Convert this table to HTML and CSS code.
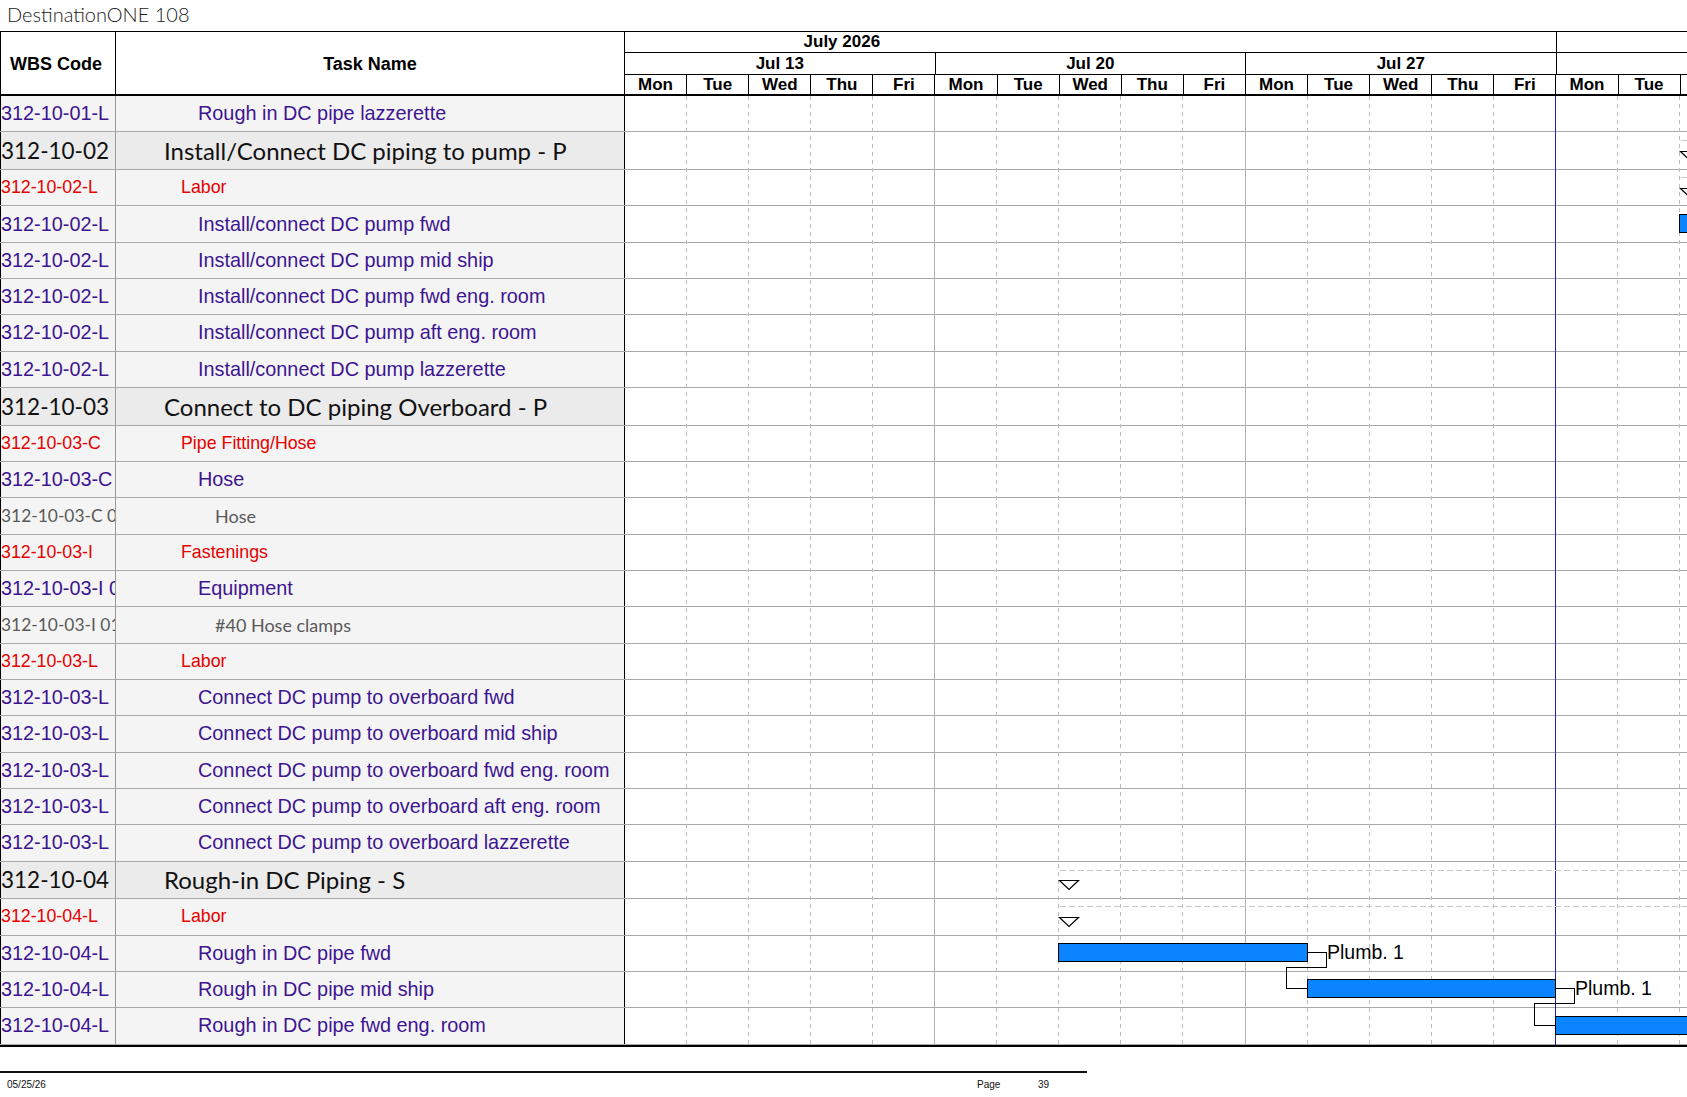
FILE: index.html
```html
<!DOCTYPE html>
<html lang="en">
<head>
<meta charset="utf-8">
<title>DestinationONE 108</title>
<link rel="stylesheet" href="styles.css">
</head>
<body>
<div class="title">DestinationONE 108</div>
<div class="sheet">
  <div class="head">
    <div class="hcell hwbs">WBS Code</div>
    <div class="hcell htask">Task Name</div>
    <div class="timescale">
      <div class="tier tier-month">
        <div class="tcell m-jul">July 2026</div>
        <div class="tcell m-aug"></div>
      </div>
      <div class="tier tier-week">
        <div class="tcell wk">Jul 13</div>
        <div class="tcell wk">Jul 20</div>
        <div class="tcell wk">Jul 27</div>
        <div class="tcell wk"></div>
      </div>
      <div class="tier tier-day">
        <div class="tcell dy">Mon</div><div class="tcell dy">Tue</div><div class="tcell dy">Wed</div><div class="tcell dy">Thu</div><div class="tcell dy">Fri</div>
        <div class="tcell dy">Mon</div><div class="tcell dy">Tue</div><div class="tcell dy">Wed</div><div class="tcell dy">Thu</div><div class="tcell dy">Fri</div>
        <div class="tcell dy">Mon</div><div class="tcell dy">Tue</div><div class="tcell dy">Wed</div><div class="tcell dy">Thu</div><div class="tcell dy">Fri</div>
        <div class="tcell dy">Mon</div><div class="tcell dy">Tue</div><div class="tcell dy"></div>
      </div>
    </div>
  </div>

  <div class="body">
    <div class="row l3"><div class="wbs">312-10-01-L</div><div class="task">Rough in DC pipe lazzerette</div><div class="gcell"></div></div>
    <div class="row l1"><div class="wbs">312-10-02</div><div class="task">Install/Connect DC piping to pump - P</div><div class="gcell"></div></div>
    <div class="row l2"><div class="wbs">312-10-02-L</div><div class="task">Labor</div><div class="gcell"></div></div>
    <div class="row l3"><div class="wbs">312-10-02-L</div><div class="task">Install/connect DC pump fwd</div><div class="gcell"></div></div>
    <div class="row l3"><div class="wbs">312-10-02-L</div><div class="task">Install/connect DC pump mid ship</div><div class="gcell"></div></div>
    <div class="row l3"><div class="wbs">312-10-02-L</div><div class="task">Install/connect DC pump fwd eng. room</div><div class="gcell"></div></div>
    <div class="row l3"><div class="wbs">312-10-02-L</div><div class="task">Install/connect DC pump aft eng. room</div><div class="gcell"></div></div>
    <div class="row l3"><div class="wbs">312-10-02-L</div><div class="task">Install/connect DC pump lazzerette</div><div class="gcell"></div></div>
    <div class="row l1"><div class="wbs">312-10-03</div><div class="task">Connect to DC piping Overboard - P</div><div class="gcell"></div></div>
    <div class="row l2"><div class="wbs">312-10-03-C</div><div class="task">Pipe Fitting/Hose</div><div class="gcell"></div></div>
    <div class="row l3"><div class="wbs">312-10-03-C 01</div><div class="task">Hose</div><div class="gcell"></div></div>
    <div class="row l4"><div class="wbs">312-10-03-C 01 01</div><div class="task">Hose</div><div class="gcell"></div></div>
    <div class="row l2"><div class="wbs">312-10-03-I</div><div class="task">Fastenings</div><div class="gcell"></div></div>
    <div class="row l3"><div class="wbs">312-10-03-I 01</div><div class="task">Equipment</div><div class="gcell"></div></div>
    <div class="row l4"><div class="wbs">312-10-03-I 01 01</div><div class="task">#40 Hose clamps</div><div class="gcell"></div></div>
    <div class="row l2"><div class="wbs">312-10-03-L</div><div class="task">Labor</div><div class="gcell"></div></div>
    <div class="row l3"><div class="wbs">312-10-03-L</div><div class="task">Connect DC pump to overboard fwd</div><div class="gcell"></div></div>
    <div class="row l3"><div class="wbs">312-10-03-L</div><div class="task">Connect DC pump to overboard mid ship</div><div class="gcell"></div></div>
    <div class="row l3"><div class="wbs">312-10-03-L</div><div class="task">Connect DC pump to overboard fwd eng. room</div><div class="gcell"></div></div>
    <div class="row l3"><div class="wbs">312-10-03-L</div><div class="task">Connect DC pump to overboard aft eng. room</div><div class="gcell"></div></div>
    <div class="row l3"><div class="wbs">312-10-03-L</div><div class="task">Connect DC pump to overboard lazzerette</div><div class="gcell"></div></div>
    <div class="row l1"><div class="wbs">312-10-04</div><div class="task">Rough-in DC Piping - S</div><div class="gcell"></div></div>
    <div class="row l2"><div class="wbs">312-10-04-L</div><div class="task">Labor</div><div class="gcell"></div></div>
    <div class="row l3"><div class="wbs">312-10-04-L</div><div class="task">Rough in DC pipe fwd</div><div class="gcell"></div></div>
    <div class="row l3"><div class="wbs">312-10-04-L</div><div class="task">Rough in DC pipe mid ship</div><div class="gcell"></div></div>
    <div class="row l3"><div class="wbs">312-10-04-L</div><div class="task">Rough in DC pipe fwd eng. room</div><div class="gcell"></div></div>

    <svg class="gantt" width="1063" height="949" viewBox="0 0 1063 949" xmlns="http://www.w3.org/2000/svg">
      <g class="g-day">
        <line x1="62.5" y1="0" x2="62.5" y2="949"/>
        <line x1="124.5" y1="0" x2="124.5" y2="949"/>
        <line x1="186.5" y1="0" x2="186.5" y2="949"/>
        <line x1="248.5" y1="0" x2="248.5" y2="949"/>
        <line x1="372.5" y1="0" x2="372.5" y2="949"/>
        <line x1="434.5" y1="0" x2="434.5" y2="949"/>
        <line x1="496.5" y1="0" x2="496.5" y2="949"/>
        <line x1="558.5" y1="0" x2="558.5" y2="949"/>
        <line x1="683.5" y1="0" x2="683.5" y2="949"/>
        <line x1="745.5" y1="0" x2="745.5" y2="949"/>
        <line x1="807.5" y1="0" x2="807.5" y2="949"/>
        <line x1="869.5" y1="0" x2="869.5" y2="949"/>
        <line x1="993.5" y1="0" x2="993.5" y2="949"/>
        <line x1="1055.5" y1="0" x2="1055.5" y2="949"/>
      </g>
      <g class="g-week">
        <line x1="310.5" y1="0" x2="310.5" y2="949"/>
        <line x1="621.5" y1="0" x2="621.5" y2="949"/>
      </g>
      <line class="g-today" x1="931.5" y1="0" x2="931.5" y2="949"/>

      <g class="g-sum">
        <line x1="1056.5" y1="44.5" x2="1063" y2="44.5"/>
        <line x1="1056.5" y1="81.5" x2="1063" y2="81.5"/>
        <line x1="435.5" y1="774.5" x2="1063" y2="774.5"/>
        <line x1="435.5" y1="810.5" x2="1063" y2="810.5"/>
      </g>
      <g class="g-tri">
        <polygon points="1056.5,55.5 1075.5,55.5 1066,64.5"/>
        <polygon points="1056.5,92.5 1075.5,92.5 1066,101.5"/>
        <polygon points="435.5,784.5 454.5,784.5 445,793.5"/>
        <polygon points="435.5,821.5 454.5,821.5 445,830.5"/>
      </g>
      <g class="g-link">
        <polyline points="683.5,856.5 702.5,856.5 702.5,871.5 662.5,871.5 662.5,892.5 683.5,892.5"/>
        <polyline points="931.5,892.5 950.5,892.5 950.5,907.5 910.5,907.5 910.5,929.5 931.5,929.5"/>
      </g>
      <g class="g-bar">
        <rect x="1055.5" y="118.5" width="30" height="18"/>
        <rect x="434.5" y="847.5" width="249" height="18"/>
        <rect x="683.5" y="883.5" width="248" height="18"/>
        <rect x="931.5" y="920.5" width="160" height="18"/>
      </g>
      <text class="g-label" x="703" y="863">Plumb. 1</text>
      <text class="g-label" x="951" y="899">Plumb. 1</text>
    </svg>
  </div>
</div>
<div class="footer">
  <span class="f-date">05/25/26</span>
  <span class="f-page">Page</span>
  <span class="f-num">39</span>
</div>
</body>
</html>
```

FILE: styles.css
```css
* { box-sizing: border-box; }

:root {
  --d: 62.1px;
  --rh: 36.33px;
  --rh1: 37.7px;
  --purple: #3d1591;
  --red: #e60000;
  --grey4: #595959;
  --rowline: #a8a8a8;
}

html, body { margin: 0; padding: 0; background: #fff; }

body {
  width: 1687px;
  height: 1097px;
  overflow: hidden;
  font-family: "Liberation Sans", Arial, sans-serif;
  color: #000;
}

.title {
  height: 31px;
  padding-left: 7px;
  font-family: Lato, "Open Sans", sans-serif;
  font-weight: 300;
  font-size: 20px;
  line-height: 29px;
  color: #1a1a1a;
}

.sheet {
  border-top: 1px solid #000;
}

/* header */
.head {
  display: grid;
  grid-template-columns: 116px 509px 1fr;
  height: 64px;
  border-bottom: 2px solid #000;
}

.hcell {
  display: flex;
  align-items: center;
  justify-content: center;
  font-weight: bold;
  font-size: 18px;
  border-right: 1px solid #000;
  padding-top: 2px;
}

.hwbs { border-left: 1px solid #000; padding-right: 4px; }

.timescale {
  overflow: hidden;
  display: flex;
  flex-direction: column;
}

.tier {
  display: flex;
  white-space: nowrap;
  overflow: hidden;
}

.tier-month { height: 21px; border-bottom: 1px solid #000; }
.tier-week { height: 22px; border-bottom: 1px solid #000; }
.tier-day { height: 19px; }

.tcell {
  flex: none;
  border-right: 1px solid #000;
  text-align: center;
  font-weight: bold;
  font-size: 17px;
  overflow: hidden;
}

.tier-month .tcell { line-height: 20px; }
.tier-week .tcell { line-height: 21px; }
.tier-day .tcell { line-height: 20px; }

.m-jul { width: calc(var(--d) * 23); margin-left: calc(var(--d) * -8); }
.m-aug { width: calc(var(--d) * 21); }
.wk { width: calc(var(--d) * 5); }
.dy { width: var(--d); }

/* body */
.body {
  position: relative;
  border-bottom: 2px solid #000;
}

.row {
  display: grid;
  grid-template-columns: 116px 509px 1fr;
  height: var(--rh);
  border-bottom: 1px solid var(--rowline);
}

.row.l1 { height: var(--rh1); }

.wbs, .task {
  display: flex;
  align-items: center;
  white-space: nowrap;
  overflow: hidden;
  background: #f4f4f4;
}

.wbs {
  border-left: 1px solid #000;
  border-right: 1px solid #9a9a9a;
}

.task {
  border-right: 1px solid #000;
}

.gcell { background: #fff; }

.row.l1 .wbs, .row.l1 .task {
  background: #ebebeb;
  font-family: Lato, "Open Sans", sans-serif;
  color: #111;
}
.row.l1 .wbs { font-size: 22.5px; }
.row.l1 .task { font-size: 24px; padding-left: 48px; }

.row.l2 .wbs, .row.l2 .task {
  font-size: 17.8px;
  color: var(--red);
}
.row.l2 .task { padding-left: 65px; }

.row.l3 .wbs, .row.l3 .task {
  font-size: 19.85px;
  color: var(--purple);
}
.row.l3 .task { padding-left: 82px; }

.row.l4 .wbs, .row.l4 .task {
  font-family: Lato, "Open Sans", sans-serif;
  font-size: 18px;
  color: var(--grey4);
}
.row.l4 .wbs { font-size: 17.4px; }
.row.l4 .task { padding-left: 99px; }

/* gantt canvas */
.gantt {
  position: absolute;
  left: 624px;
  top: 0;
  shape-rendering: crispEdges;
  overflow: hidden;
}

.g-day line { stroke: #bdbdbd; stroke-width: 1; stroke-dasharray: 4 4; }
.g-week line { stroke: #b2b2b2; stroke-width: 1; }
.g-today { stroke: #1f1fb0; stroke-width: 1; }
.g-sum line { stroke: #c8c8c8; stroke-width: 1; stroke-dasharray: 6 3; }
.g-tri polygon { fill: #fff; stroke: #000; stroke-width: 1.2; shape-rendering: geometricPrecision; }
.g-link polyline { fill: none; stroke: #000; stroke-width: 1; }
.g-bar rect { fill: #0a84ff; stroke: #000; stroke-width: 1; }
.g-label {
  font-family: "Liberation Sans", Arial, sans-serif;
  font-size: 19.5px;
  fill: #000;
}

/* footer */
.footer {
  width: 1087px;
  margin-top: 24px;
  border-top: 2px solid #111;
  display: flex;
  padding: 6px 0 0 7px;
  font-family: "Liberation Sans", Arial, sans-serif;
  font-size: 10px;
  line-height: 12px;
  color: #111;
}

.f-date { width: 970px; }
.f-page { width: 61px; }
```
